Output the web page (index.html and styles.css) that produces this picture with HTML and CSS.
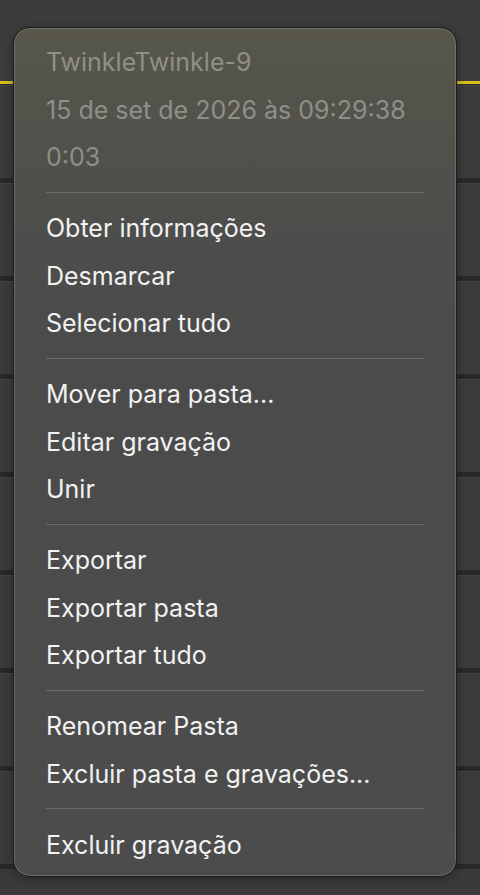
FILE: index.html
```html
<!DOCTYPE html>
<html lang="pt-BR">
<head>
<meta charset="utf-8">
<title>Menu</title>
<link rel="stylesheet" href="styles.css">
</head>
<body>
<div class="screen">
  <div class="list">
    <div class="list-top"></div>
    <div class="accent"></div>
    <div class="row"></div>
    <div class="row"></div>
    <div class="row"></div>
    <div class="row"></div>
    <div class="row"></div>
    <div class="row"></div>
    <div class="row"></div>
    <div class="row"></div>
  </div>
  <div class="menu">
    <div class="group">
      <div class="info">TwinkleTwinkle-9</div>
      <div class="info">15 de set de 2026 às 09:29:38</div>
      <div class="info">0:03</div>
    </div>
    <div class="sep"></div>
    <div class="group">
      <div class="item">Obter informações</div>
      <div class="item">Desmarcar</div>
      <div class="item">Selecionar tudo</div>
    </div>
    <div class="sep"></div>
    <div class="group">
      <div class="item">Mover para pasta...</div>
      <div class="item">Editar gravação</div>
      <div class="item">Unir</div>
    </div>
    <div class="sep"></div>
    <div class="group">
      <div class="item">Exportar</div>
      <div class="item">Exportar pasta</div>
      <div class="item">Exportar tudo</div>
    </div>
    <div class="sep"></div>
    <div class="group">
      <div class="item">Renomear Pasta</div>
      <div class="item">Excluir pasta e gravações...</div>
    </div>
    <div class="sep"></div>
    <div class="group">
      <div class="item">Excluir gravação</div>
    </div>
  </div>
</div>
</body>
</html>
```

FILE: styles.css
```css
html, body {
  margin: 0;
  padding: 0;
}
body {
  width: 480px;
  height: 895px;
  overflow: hidden;
  background: #3a3a3a;
  font-family: Inter, "Noto Sans", "Liberation Sans", sans-serif;
}
.screen {
  position: relative;
  width: 480px;
  height: 895px;
  overflow: hidden;
}
.list {
  display: flex;
  flex-direction: column;
}
.list-top {
  height: 81px;
  background: #3c3c3c;
}
.accent {
  height: 3px;
  background: #d9bc1e;
  border-bottom: 1px solid #2e2e2e;
}
.row {
  height: 92px;
  flex: none;
  background: #3b3b3b;
  border-top: 1px solid #454545;
  border-bottom: 5px solid #282828;
}
.menu {
  position: absolute;
  left: 13px;
  top: 27px;
  width: 444px;
  box-sizing: border-box;
  height: 850px;
  padding: 11px 32px 9px;
  border-radius: 17px;
  background: linear-gradient(180deg, #58574a 0%, #53524b 10%, #4d4d4b 24%, #4b4b4b 40%, #4c4c4c 100%);
  border: 1px solid #1c1c1c;
  box-shadow: inset 0 0 0 1px rgba(255, 255, 255, 0.16), 0 2px 10px rgba(0, 0, 0, 0.35);
}
.group {
  display: flex;
  flex-direction: column;
}
.info,
.item {
  height: 47.5px;
  line-height: 47.5px;
  font-size: 25px;
  white-space: nowrap;
}
.info {
  color: #8f8f89;
}
.item {
  color: #f2f2f2;
}
.sep {
  height: 1px;
  background: #6b6b6b;
  margin: 10px 0 12.5px;
}
```
